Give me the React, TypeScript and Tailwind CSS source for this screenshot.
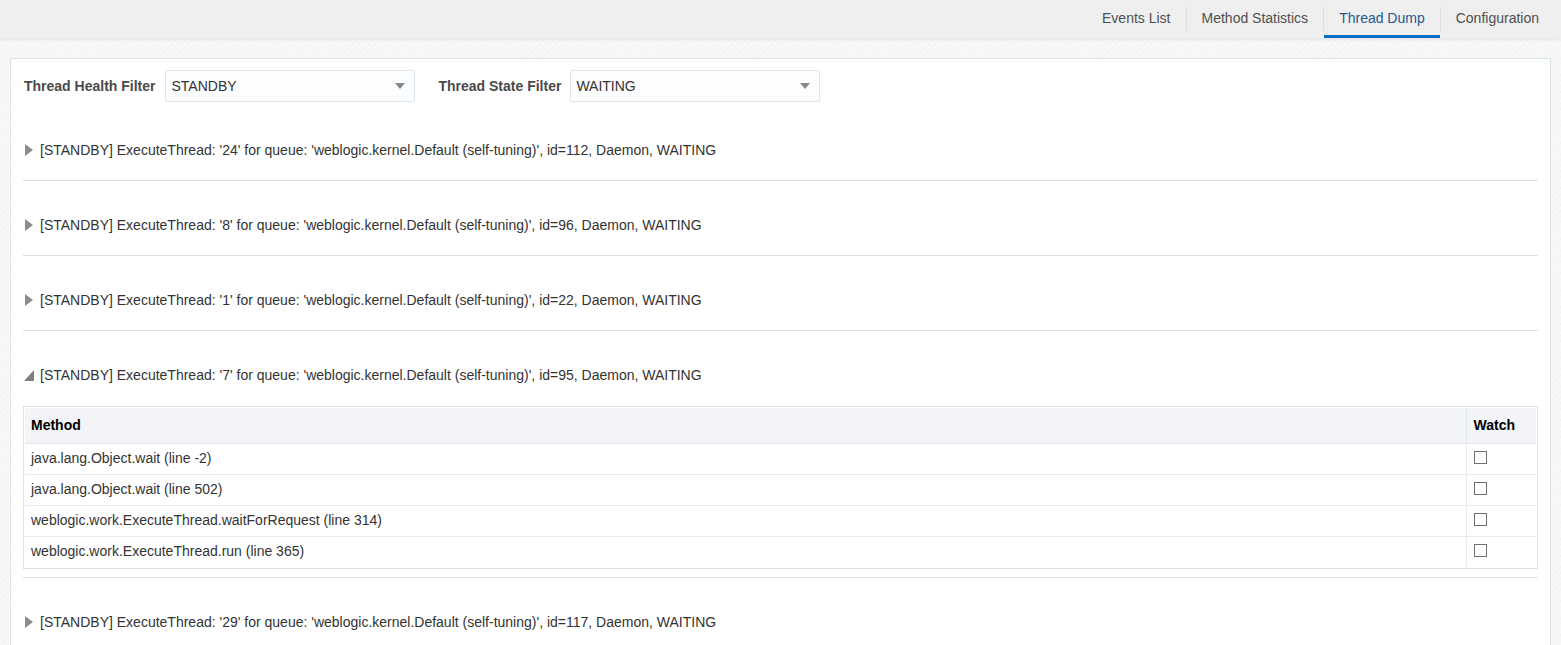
import { useState } from "react";

const tabs = ["Events List", "Method Statistics", "Thread Dump", "Configuration"];

type Thread = { name: string; id: number; open?: boolean };

const threads: Thread[] = [
  { name: "24", id: 112 },
  { name: "8", id: 96 },
  { name: "1", id: 22 },
  { name: "7", id: 95, open: true },
  { name: "29", id: 117 },
  { name: "12", id: 100 },
];

const frames = [
  "java.lang.Object.wait (line -2)",
  "java.lang.Object.wait (line 502)",
  "weblogic.work.ExecuteThread.waitForRequest (line 314)",
  "weblogic.work.ExecuteThread.run (line 365)",
];

function Select({ value }: { value: string }) {
  return (
    <div className="flex h-[32px] w-[250px] items-center justify-between rounded-[2px] border border-[#dfe4e8] bg-[#fcfdfe] pl-[5px] pr-[9px] text-[14px] text-[#333]">
      <span>{value}</span>
      <svg width="10" height="6" viewBox="0 0 10 6">
        <path d="M0 0H10L5 6Z" fill="#8a8a8a" />
      </svg>
    </div>
  );
}

function ThreadRow({ t }: { t: Thread }) {
  const [open, setOpen] = useState(!!t.open);
  return (
    <div className="border-b border-[#d9e1e7] pt-[34px] pb-[20px]">
      <button
        onClick={() => setOpen(!open)}
        className="flex h-[20px] items-center gap-[6px] pl-px text-[14px] text-[#333]"
      >
        {open ? (
          <svg width="10" height="11" viewBox="0 0 10 11">
            <path d="M10 0V11H0Z" fill="#7f7f7f" />
          </svg>
        ) : (
          <svg width="10" height="12" viewBox="0 0 10 12">
            <path d="M1 0L9 6L1 12Z" fill="#8c8c8c" />
          </svg>
        )}
        <span>
          [STANDBY] ExecuteThread: '{t.name}' for queue: 'weblogic.kernel.Default (self-tuning)', id={t.id}, Daemon, WAITING
        </span>
      </button>
      {open && (
        <div className="mt-[21px] -mb-[12px] border border-[#d9e1e7] p-px">
          <table className="w-full border-collapse text-[14px] text-[#333]">
            <thead>
              <tr className="h-[35px] bg-[#f2f4f7]">
                <th className="border-b border-[#e4e8ec] pl-[6px] text-left font-bold text-black">Method</th>
                <th className="w-[70px] border-b border-l border-[#e4e8ec] pl-[7px] text-left font-bold text-black">Watch</th>
              </tr>
            </thead>
            <tbody>
              {frames.map((f, i) => (
                <tr key={f} className="h-[31px]">
                  <td className={`pl-[6px] ${i < frames.length - 1 ? "border-b border-[#e8ebee]" : ""}`}>{f}</td>
                  <td className={`border-l border-[#e8ebee] pl-[7px] ${i < frames.length - 1 ? "border-b" : ""}`}>
                    <div className="mb-[3px] h-[13px] w-[13px] border border-[#6f6f6f] bg-white" />
                  </td>
                </tr>
              ))}
            </tbody>
          </table>
        </div>
      )}
    </div>
  );
}

export default function App() {
  return (
    <div className="min-h-screen bg-[repeating-linear-gradient(135deg,#f3f3f3_0px,#f3f3f3_1px,#f8f8f8_1px,#f8f8f8_4px)] font-['Liberation_Sans',Arial,sans-serif]">
      {/* top tab bar */}
      <div className="relative z-10 flex h-[38px] justify-end bg-[#efefef] pr-[7px] shadow-[0_2px_3px_rgba(0,0,0,0.07)]">
        {tabs.map((tab, i) => {
          const active = tab === "Thread Dump";
          return (
            <div key={tab} className="flex items-center">
              {i > 0 && <div className="h-[24px] w-px bg-[#dcdcdc]" />}
              <div
                className={`flex h-[38px] items-center border-b-[3px] px-[15px] text-[14px] ${
                  active ? "border-[#0a6cc9] text-[#1f5a91]" : "border-transparent text-[#4f4f4f]"
                }`}
              >
                <span className="pt-[1px]">{tab}</span>
              </div>
            </div>
          );
        })}
      </div>

      {/* main panel */}
      <div className="px-[10px] pt-[20px]">
        <div className="border border-[#d9e3ea] bg-white px-[12px] pt-[11px] pb-[40px]">
          <div className="mb-[4px] flex items-center pl-px">
            <span className="mr-[10px] text-[14px] font-bold text-[#4a4a4a]">Thread Health Filter</span>
            <Select value="STANDBY" />
            <span className="ml-[23px] mr-[9px] text-[14px] font-bold text-[#4a4a4a]">Thread State Filter</span>
            <Select value="WAITING" />
          </div>
          {threads.map((t) => (
            <ThreadRow key={t.name} t={t} />
          ))}
        </div>
      </div>
    </div>
  );
}
